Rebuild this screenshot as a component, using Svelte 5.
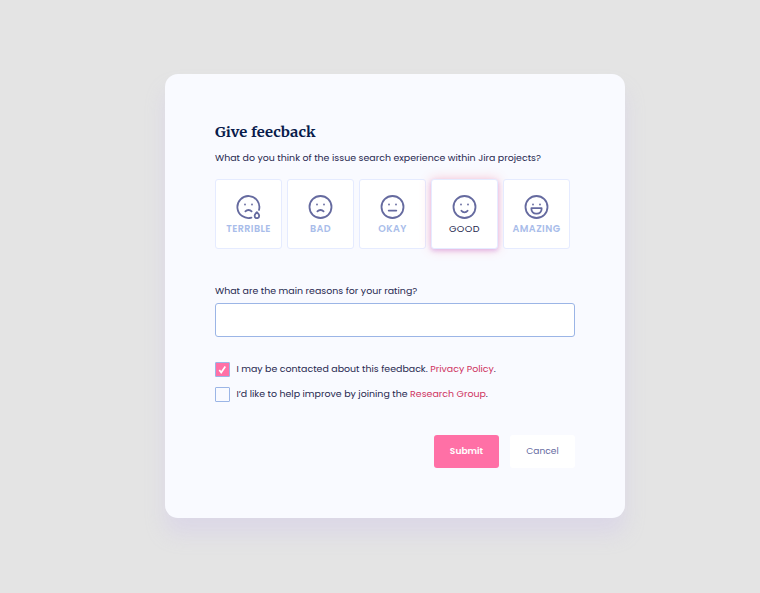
<script>
  const ratings = ['TERRIBLE', 'BAD', 'OKAY', 'GOOD', 'AMAZING'];
  let selected = $state('GOOD');
  let contact = $state(true);
  let research = $state(false);
  let reason = $state('');
</script>

<main>
  <form class="card" onsubmit={(e) => e.preventDefault()}>
    <h1>Give feecback</h1>
    <p class="question first">What do you think of the issue search experience within Jira projects?</p>

    <div class="ratings">
      {#each ratings as label}
        <button type="button" class="rating" class:active={selected === label} onclick={() => (selected = label)}>
          <svg viewBox="-0.5 0 25 24" fill="none" stroke="#656a9f" stroke-width="1.8" stroke-linecap="round" stroke-linejoin="round">
            {#if label === 'TERRIBLE'}
              <path d="M22.5 14.9A11 11 0 1 0 14.9 22.6" />
              <path d="M20.4 17.1c1.3 1.3 2.3 2.3 2.3 3.6a2.3 2.5 0 0 1-4.6 0c0-1.3 1-2.3 2.3-3.6Z" />
            {:else}
              <circle cx="12" cy="12" r="11" />
            {/if}
            <circle class="eye" cx="8.5" cy="9.5" r="0.9" />
            <circle class="eye" cx="15.5" cy="9.5" r="0.9" />
            {#if label === 'TERRIBLE' || label === 'BAD'}
              <path d="M8.9 16.4c.9-1 1.9-1.4 3.1-1.4s2.2.4 3.1 1.4" />
            {:else if label === 'OKAY'}
              <path d="M8.2 15.6h7.6" />
            {:else if label === 'GOOD'}
              <path d="M8.9 15.8c.8 1 1.8 1.5 3.1 1.5s2.3-.5 3.1-1.5" />
            {:else}
              <path d="M6.9 13.2h10.2v.9a4.6 4.6 0 0 1-4.6 4.6h-1a4.6 4.6 0 0 1-4.6-4.6Z" />
            {/if}
          </svg>
          <span>{label}</span>
        </button>
      {/each}
    </div>

    <label class="question second" for="reason">What are the main reasons for your rating?</label>
    <input id="reason" class="field" type="text" bind:value={reason} />

    <label class="check top">
      <input type="checkbox" bind:checked={contact} />
      <span class="box" class:on={contact}>
        {#if contact}
          <svg viewBox="0 0 13 13" fill="none" stroke="#fff" stroke-width="1.7"><path d="M3.3 7.1 5.2 9.6 9.3 3.6" /></svg>
        {/if}
      </span>
      <span class="text">I may be contacted about this feedback. <a href="#privacy">Privacy Policy</a>.</span>
    </label>
    <label class="check">
      <input type="checkbox" bind:checked={research} />
      <span class="box" class:on={research}></span>
      <span class="text">I’d like to help improve by joining the <a href="#group">Research Group</a>.</span>
    </label>

    <div class="actions">
      <button class="submit" type="submit">Submit</button>
      <button class="cancel" type="button">Cancel</button>
    </div>
  </form>
</main>

<style>
  :global(body) { background: #e4e4e4; }
  main {
    box-sizing: border-box;
    height: 593px;
    padding: 74px 0 0 165px;
    font-family: Poppins, Inter, sans-serif;
    font-size: 9.43px;
    color: #27284f;
  }
  .card {
    box-sizing: border-box;
    width: 460px;
    height: 444px;
    padding: 50px;
    border-radius: 13px;
    background: #f9faff;
    box-shadow: 0 16px 20px rgba(197, 182, 240, 0.26);
    display: flex;
    flex-direction: column;
  }
  h1 {
    align-self: flex-start;
    margin: 0;
    font: bold 14px/17px Merriweather, 'DejaVu Serif Condensed', 'DejaVu Serif', serif;
    letter-spacing: 0.1px;
    transform: scaleX(1.055);
    transform-origin: left;
    color: #081b4b;
    white-space: nowrap;
  }
  .question { margin: 0; line-height: 16px; white-space: nowrap; }
  .first { margin-top: 9px; }
  .second { margin-top: 34px; }
  .ratings { display: flex; gap: 5px; margin-top: 13px; }
  button { font-family: inherit; cursor: pointer; }
  .rating {
    box-sizing: border-box;
    width: 67px;
    height: 70px;
    padding: 15px 0 0;
    border: 1px solid #e5ebff;
    border-radius: 3px;
    background: #fff;
    display: flex;
    flex-direction: column;
    align-items: center;
    font-size: 9.6px;
    font-weight: 600;
    line-height: 14px;
    letter-spacing: 0.42px;
    color: #a9bdea;
  }
  .rating svg { width: 25px; height: 24px; flex: none; }
  .rating span { margin-top: 3px; white-space: nowrap; }
  .eye { fill: #656a9f; stroke: none; }
  .active {
    color: #27284f;
    font-weight: 400;
    box-shadow: 0 2px 4px rgba(180, 91, 216, 0.32), 0 0 12px rgba(255, 100, 120, 0.32);
  }
  .field {
    box-sizing: border-box;
    width: 360px;
    height: 34px;
    margin: 4px 0 0;
    padding: 0 10px;
    border: 1px solid #9bb5e6;
    border-radius: 3px;
    background: #fff;
    font: inherit;
    outline: none;
  }
  .check { display: flex; align-items: center; height: 15px; margin-top: 10px; white-space: nowrap; }
  .check.top { margin-top: 25px; }
  .check input { appearance: none; width: 0; height: 0; margin: 0; }
  .text { line-height: 14px; padding-bottom: 1px; }
  .box {
    box-sizing: border-box;
    width: 15px;
    height: 15px;
    margin-right: 6.4px;
    border: 1px solid #9bb5e6;
    border-radius: 1px;
  }
  .box.on { background: #ff70a6; }
  .box svg { display: block; width: 13px; height: 13px; }
  a { color: #cf345f; text-decoration: none; }
  .actions { display: flex; justify-content: flex-end; gap: 11px; margin-top: 33px; }
  .actions button {
    width: 65px;
    height: 33px;
    padding: 0 0 1px;
    border: 0;
    border-radius: 3px;
    font-size: 9.1px;
  }
  .submit { background: #ff70a6; color: #fff; font-weight: 600; }
  .actions .cancel { background: #fff; color: #656a9f; font-weight: 400; }
</style>
